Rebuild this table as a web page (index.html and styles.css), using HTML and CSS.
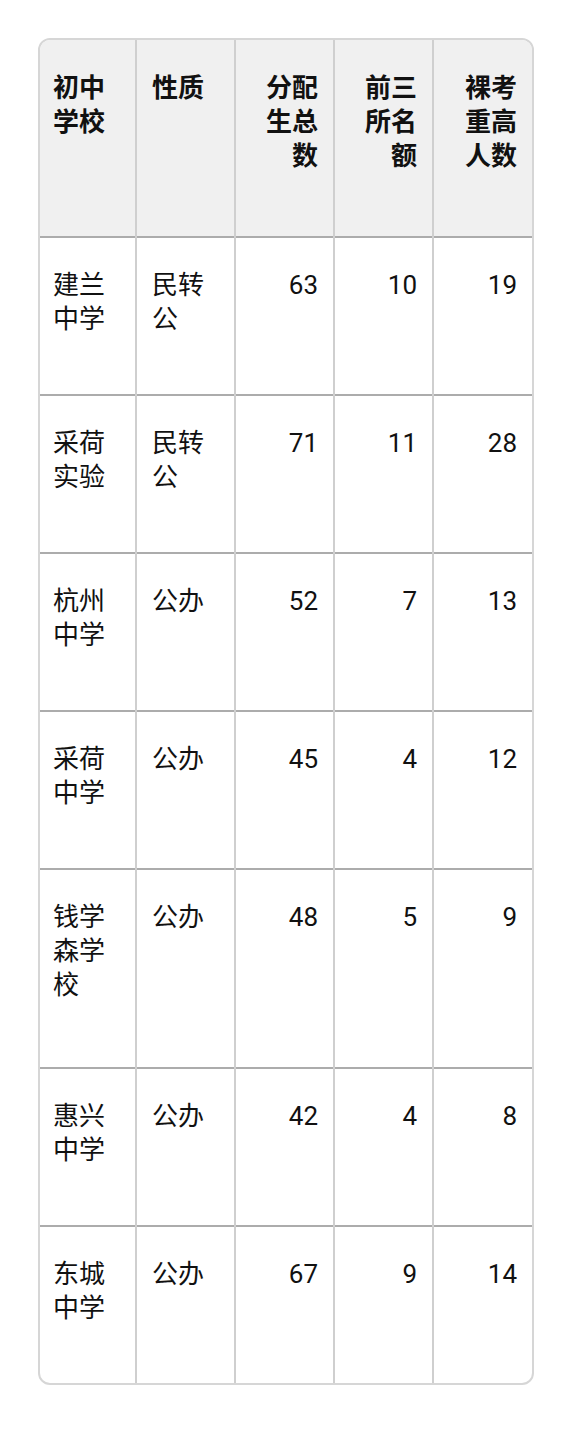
FILE: index.html
```html
<!DOCTYPE html>
<html lang="zh">
<head>
<meta charset="utf-8">
<link rel="stylesheet" href="styles.css">
</head>
<body>
<div class="wrap">
<table class="grid">
<colgroup>
<col class="c-first">
<col class="c-mid">
<col class="c-mid">
<col class="c-mid">
<col class="c-mid">
</colgroup>
<thead>
<tr class="r-head">
<th class="l">初中<br>学校</th>
<th class="l">性质</th>
<th class="r">分配<br>生总<br>数</th>
<th class="r">前三<br>所名<br>额</th>
<th class="r">裸考<br>重高<br>人数</th>
</tr>
</thead>
<tbody>
<tr class="r-2"><td class="l">建兰<br>中学</td><td class="l">民转<br>公</td><td class="r">63</td><td class="r">10</td><td class="r">19</td></tr>
<tr class="r-2"><td class="l">采荷<br>实验</td><td class="l">民转<br>公</td><td class="r">71</td><td class="r">11</td><td class="r">28</td></tr>
<tr class="r-2"><td class="l">杭州<br>中学</td><td class="l">公办</td><td class="r">52</td><td class="r">7</td><td class="r">13</td></tr>
<tr class="r-2"><td class="l">采荷<br>中学</td><td class="l">公办</td><td class="r">45</td><td class="r">4</td><td class="r">12</td></tr>
<tr class="r-3"><td class="l">钱学<br>森学<br>校</td><td class="l">公办</td><td class="r">48</td><td class="r">5</td><td class="r">9</td></tr>
<tr class="r-2"><td class="l">惠兴<br>中学</td><td class="l">公办</td><td class="r">42</td><td class="r">4</td><td class="r">8</td></tr>
<tr class="r-2 last"><td class="l">东城<br>中学</td><td class="l">公办</td><td class="r">67</td><td class="r">9</td><td class="r">14</td></tr>
</tbody>
</table>
</div>
</body>
</html>
```
FILE: styles.css
```css
html, body {
  margin: 0;
  padding: 0;
  background: #ffffff;
}
body {
  padding: 38px 38px 51px 38px;
  font-family: Roboto, "Noto Sans CJK SC", sans-serif;
  color: #111111;
}
.wrap {
  width: 496px;
  box-sizing: border-box;
  border: 2px solid #d6d6d6;
  border-radius: 12px;
  overflow: hidden;
}
.grid {
  width: 492px;
  border-collapse: collapse;
  table-layout: fixed;
  font-size: 26px;
  line-height: 34px;
}
.c-first { width: 96px; }
.c-mid { width: 99px; }
.grid th, .grid td {
  vertical-align: top;
  padding: 30px 15px 0 15px;
  border-left: 2px solid #cfcfcf;
  border-top: 2px solid #acacac;
  box-sizing: border-box;
}
.grid th:first-child, .grid td:first-child {
  border-left: none;
  padding-left: 13px;
}
.grid thead th {
  border-top: none;
  background: #f0f0f0;
  font-weight: 700;
  padding-top: 31px;
}
.l { text-align: left; }
.r { text-align: right; }
.r-head { height: 197px; }
.r-2 { height: 158px; }
.r-3 { height: 199px; }
.last { height: 157px; }
```
